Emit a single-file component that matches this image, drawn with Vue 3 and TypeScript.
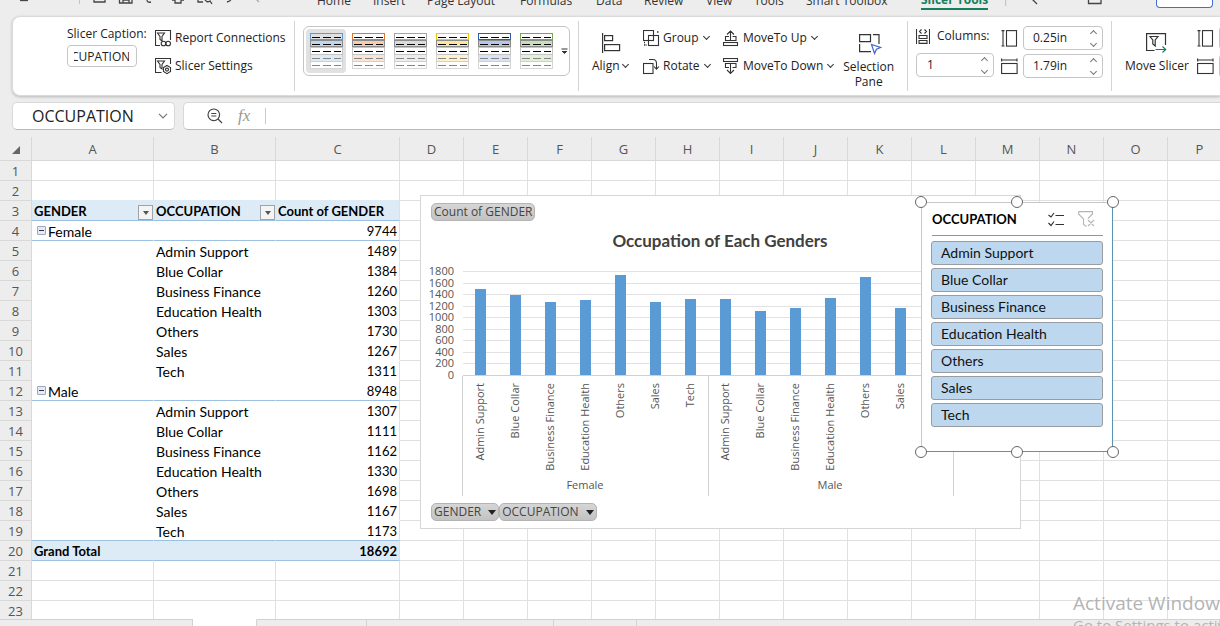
<script setup lang="ts">
import { ref } from 'vue'

interface Theme { name: string; edge: string; mid: string; soft: string }
interface Row { n: number; a?: string; b?: string; c?: string; kind: 'k-plain' | 'k-head' | 'k-group' | 'k-item' | 'k-total' }

const tabs = ['Home', 'Insert', 'Page Layout', 'Formulas', 'Data', 'Review', 'View', 'Tools', 'Smart Toolbox']

const themes: Theme[] = [
  { name: 'Blue', edge: '#5b9bd5', mid: '#bdd7ee', soft: '#deebf7' },
  { name: 'Orange', edge: '#e0752e', mid: '#f8cbad', soft: '#fbe5d6' },
  { name: 'Gray', edge: '#a5a5a5', mid: '#dbdbdb', soft: '#ededed' },
  { name: 'Yellow', edge: '#f0c800', mid: '#ffe699', soft: '#fff2cc' },
  { name: 'Indigo', edge: '#2f5ca8', mid: '#b4c7e7', soft: '#dae3f3' },
  { name: 'Green', edge: '#70ad47', mid: '#c5e0b4', soft: '#e2f0d9' },
]

const letters = 'ABCDEFGHIJKLMNOP'.split('')
const occupations = ['Admin Support', 'Blue Collar', 'Business Finance', 'Education Health', 'Others', 'Sales', 'Tech']
const groups = [
  { name: 'Female', total: 9744, counts: [1489, 1384, 1260, 1303, 1730, 1267, 1311] },
  { name: 'Male', total: 8948, counts: [1307, 1111, 1162, 1330, 1698, 1167, 1173] },
]

const rows: Row[] = []
const add = (r: Omit<Row, 'n'>) => rows.push({ n: rows.length + 1, ...r })
add({ kind: 'k-plain' })
add({ kind: 'k-plain' })
add({ kind: 'k-head', a: 'GENDER', b: 'OCCUPATION', c: 'Count of GENDER' })
for (const g of groups) {
  add({ kind: 'k-group', a: g.name, c: String(g.total) })
  occupations.forEach((o, i) => add({ kind: 'k-item', b: o, c: String(g.counts[i]) }))
}
add({ kind: 'k-total', a: 'Grand Total', c: '18692' })
for (let i = 0; i < 3; i++) add({ kind: 'k-plain' })

const step = 35
const plotLeft = 42
const base = 179
const plotHeight = 104
const bars = groups.flatMap((g, gi) =>
  g.counts.map((v, i) => ({
    label: occupations[i],
    x: plotLeft + (gi * 7 + i) * step + 12,
    h: Math.round((v / 1800) * plotHeight),
  })),
)
const ticks = Array.from({ length: 10 }, (_, i) => ({ v: i * 200, y: Math.round(base - (i * plotHeight) / 9) + 0.5 }))

const handles = ['nw', 'n', 'ne', 'sw', 's', 'se']
const caption = ref('OCCUPATION')
const cellName = ref('OCCUPATION')
const columns = ref('1')
const height = ref('0.25in')
const width = ref('1.79in')
const formula = ref('')
</script>

<template>
  <div class="app">
    <nav class="tabs">
      <div class="quick">
        <svg width="300" height="16" viewBox="0 0 300 16" fill="none" stroke="#444" stroke-width="1.3">
          <path d="M20 0.500H28" />
          <path d="M79.5 0V4" stroke="#c4c4c4" stroke-width="1" />
          <path d="M94 0V2H105V0" />
          <path d="M119.500 0V3H132V0M123 3V0H129V3" />
          <path d="M147 0Q147 3 151 2" />
          <path d="M172 0H175V3H181V0H184" />
          <path d="M198 0V2H203M205 0Q207 3 210 1L212 4" />
          <path d="M227 2Q231 1 231 -1" />
          <path d="M256 -1L259 2" stroke="#aaa" />
        </svg>
      </div>
      <a v-for="t in tabs" :key="t" href="#">{{ t }}</a>
      <a href="#" class="active">Slicer Tools</a>
      <div class="tail">
        <svg width="40" height="16" viewBox="0 0 40 16" fill="none" stroke="#444" stroke-width="1.3">
          <path d="M0.500 0V6" stroke="#c4c4c4" /><path d="M27 -1L32 4" />
        </svg>
        <svg width="16" height="16" viewBox="0 0 16 16" fill="none" stroke="#444" stroke-width="1.300"><path d="M1.500 0V3.500H14V0" /></svg>
        <button class="share" aria-label="Share"></button>
      </div>
    </nav>

    <section class="ribbon">
      <div class="group g-caption">
        <div class="caption">
          <label for="cap">Slicer Caption:</label>
          <input id="cap" v-model="caption" class="cap-input" />
        </div>
        <div class="stack">
          <button class="tool">
            <svg width="17" height="17" viewBox="0 0 17 17" fill="none" stroke="#333" stroke-width="1.100">
              <path d="M5 15.500H0.500V0.500H15.500V10" /><path d="M2.500 3H9.500L7 6.500V11L5 9.500V6.500Z" />
              <circle cx="8.500" cy="13.500" r="2.300" /><circle cx="13.200" cy="13.500" r="2.300" />
            </svg>Report Connections
          </button>
          <button class="tool">
            <svg width="17" height="17" viewBox="0 0 17 17" fill="none" stroke="#333" stroke-width="1.100">
              <path d="M6.500 14.500H0.500V0.500H15.500V6" /><path d="M2.500 3H9.500L7 6.500V11L5 9.500V6.500Z" />
              <path d="M12 7.500L15.500 9.500V13.500L12 15.700L8.500 13.500V9.500Z" /><circle cx="12" cy="11.600" r="1.500" />
            </svg>Slicer Settings
          </button>
        </div>
      </div>

      <div class="group g-gallery">
        <div class="gallery">
          <button v-for="(t, i) in themes" :key="t.name" class="thumb" :class="{ on: i === 0 }" :aria-label="t.name">
            <svg width="33" height="36" viewBox="0 0 33 36" shape-rendering="crispEdges" fill="#fff">
              <rect x="0.500" y="28.500" width="32" height="7" stroke="#d6d6d6" />
              <rect x="0.500" y="21.500" width="32" height="7" :fill="t.soft" stroke="#cfcfcf" />
              <rect x="0.500" y="14.500" width="32" height="7" stroke="#c4c4c4" />
              <rect x="0.500" y="7.500" width="32" height="6" :fill="t.mid" stroke="#8c8c8c" />
              <rect x="0.500" y="0.500" width="32" height="6" :fill="i === 0 ? '#e1e1e1' : '#fff'" :stroke="t.edge" />
              <path d="M2 4.500H31M2 11.500H31M2 18.500H31" stroke="#000" stroke-dasharray="8 3" />
              <path d="M2 25.500H31M2 32.500H31" stroke="#858585" stroke-dasharray="8 3" />
            </svg>
          </button>
          <button class="more" aria-label="More styles">
            <svg width="7" height="7" viewBox="0 0 7 7"><path d="M0.500 1H6.500" stroke="#333" /><path d="M1 3L3.500 5.500L6 3" fill="#333" stroke="#333" /></svg>
          </button>
        </div>
      </div>

      <div class="group g-arrange">
        <button class="big align">
          <svg width="19" height="20" viewBox="0 0 19 20" fill="none" stroke="#333" stroke-width="1.200">
            <path d="M0.600 0V20" /><rect x="2.600" y="2.600" width="8" height="5" /><rect x="2.600" y="11.600" width="15" height="6" />
          </svg>
          <span>Align <i class="chev"></i></span>
        </button>
        <div class="stack s-group">
          <button class="tool">
            <svg width="17" height="17" viewBox="0 0 17 17" fill="none" stroke="#333" stroke-width="1.100">
              <rect x="0.500" y="0.500" width="10" height="10" /><rect x="5.500" y="5.500" width="10" height="10" />
              <path d="M14 2H15.500M1 15H2.500M1 12.500H2M4 15H3.500" stroke-width="1.600" />
            </svg>Group <i class="chev"></i>
          </button>
          <button class="tool">
            <svg width="17" height="17" viewBox="0 0 17 17" fill="none" stroke="#333" stroke-width="1.100">
              <rect x="0.500" y="5.500" width="9.500" height="10" /><path d="M6 1.500H10Q13.500 1.500 13.500 5.500V11M11 8.500L13.500 11.200L16 8.500" />
            </svg>Rotate <i class="chev"></i>
          </button>
        </div>
        <div class="stack">
          <button class="tool">
            <svg width="17" height="17" viewBox="0 0 17 17" fill="none" stroke="#333" stroke-width="1.100">
              <path d="M7.500 10.500V1M4 4.500L7.500 1L11 4.500M6 6.500H2.500V10.500H13V6.500H9.500" /><rect x="0.500" y="12.500" width="14" height="3" />
            </svg>MoveTo Up <i class="chev"></i>
          </button>
          <button class="tool">
            <svg width="17" height="17" viewBox="0 0 17 17" fill="none" stroke="#333" stroke-width="1.100">
              <rect x="0.500" y="0.500" width="14" height="3" /><path d="M7.500 5.500V15.500M4 12L7.500 15.500L11 12M6 9.500H2.500V5.500H13V9.500H9.500" />
            </svg>MoveTo Down <i class="chev"></i>
          </button>
        </div>
        <button class="big pane">
          <svg width="23" height="22" viewBox="0 0 23 22" fill="none" stroke="#333" stroke-width="1.200">
            <path d="M0.600 7V1.600H11.500V8.600H0.600ZM14 1.600H20V11M0.600 11V18.600H12" />
            <path d="M12.500 11.500L21.500 14.500L17.500 16.200L15.500 20.500Z" stroke="#3f63cf" />
          </svg>
          <span>Selection<br />Pane</span>
        </button>
      </div>

      <div class="group g-size">
        <div class="cols">
          <label for="cols">
            <svg width="14" height="15" viewBox="0 0 14 15" fill="none" stroke="#333" stroke-width="1.100">
              <path d="M0.500 0V15M13.500 0V15M5.500 0.500L3.500 2.500L5.500 4.500M8.500 0.500L10.500 2.500L8.500 4.500M3 6.500H11V9.500H3ZM3 11.500H11V14.400H3Z" />
            </svg>Columns:
          </label>
          <div class="spin"><input id="cols" v-model="columns" />
            <div><button class="up" aria-label="More columns"></button><button class="down" aria-label="Fewer columns"></button></div>
          </div>
        </div>
        <div class="dims">
          <label class="dim">
            <svg width="17" height="17" viewBox="0 0 17 17" fill="none" stroke="#333" stroke-width="1.100"><path d="M2 1V16M0.500 0.600H3.500M0.500 16H3.500" /><rect x="5.500" y="0.600" width="10" height="15.500" /></svg>
            <span class="spin"><input v-model="height" aria-label="Height" />
              <span><button class="up" aria-label="Taller"></button><button class="down" aria-label="Shorter"></button></span></span>
          </label>
          <label class="dim">
            <svg width="17" height="17" viewBox="0 0 17 17" fill="none" stroke="#333" stroke-width="1.100"><path d="M1 2H16M0.600 0.500V3.500M16 0.500V3.500" /><rect x="0.600" y="5.500" width="15.500" height="10" /></svg>
            <span class="spin"><input v-model="width" aria-label="Width" />
              <span><button class="up" aria-label="Wider"></button><button class="down" aria-label="Narrower"></button></span></span>
          </label>
        </div>
      </div>

      <div class="group g-move">
        <button class="big move">
          <svg width="21" height="20" viewBox="0 0 21 20" fill="none" stroke="#333" stroke-width="1.200">
            <path d="M8.500 17.500H0.600V0.600H19.500V12" /><path d="M4 3.500H12L9.200 7V13L6.800 11V7Z" />
            <path d="M9.500 16.500H19.500M16.500 13.500L19.700 16.500L16.500 19.500" stroke="#14805e" />
          </svg>
          <span>Move Slicer</span>
        </button>
        <div class="dims">
          <label class="dim">
            <svg width="17" height="17" viewBox="0 0 17 17" fill="none" stroke="#333" stroke-width="1.100"><path d="M2 1V16M0.500 0.600H3.500M0.500 16H3.500" /><rect x="5.500" y="0.600" width="10" height="15.500" /></svg>
            <span class="spin"><input aria-label="Button height" /></span>
          </label>
          <label class="dim">
            <svg width="17" height="17" viewBox="0 0 17 17" fill="none" stroke="#333" stroke-width="1.100"><path d="M1 2H16M0.600 0.500V3.500M16 0.500V3.500" /><rect x="0.600" y="5.500" width="15.500" height="10" /></svg>
            <span class="spin"><input aria-label="Button width" /></span>
          </label>
        </div>
      </div>
    </section>

    <section class="formula-row">
      <div class="namebox">
        <input v-model="cellName" aria-label="Name box" />
        <button aria-label="Names">
          <svg width="10" height="6" viewBox="0 0 10 6" fill="none" stroke="#777" stroke-width="1.200"><path d="M1 0.800L5 4.800L9 0.800" /></svg>
        </button>
      </div>
      <div class="formula">
        <button aria-label="Search">
          <svg width="16" height="16" viewBox="0 0 16 16" fill="none" stroke="#444" stroke-width="1.200"><circle cx="6.800" cy="6.800" r="5.800" /><path d="M4.300 5.500H9.300M4.300 8H9.300M11 11L15 15" /></svg>
        </button>
        <button class="fx">fx</button>
        <input v-model="formula" aria-label="Formula" />
      </div>
    </section>

    <main class="sheet">
      <table>
        <colgroup>
          <col class="w-num" /><col class="w-ab" /><col class="w-ab" /><col class="w-c" />
          <col v-for="l in letters.slice(3)" :key="l" class="w-std" />
        </colgroup>
        <thead>
          <tr>
            <th class="corner"><svg width="8" height="8" viewBox="0 0 8 8"><path d="M8 0V8H0Z" fill="#666" /></svg></th>
            <th v-for="l in letters" :key="l">{{ l }}</th>
          </tr>
        </thead>
        <tbody>
          <tr v-for="r in rows" :key="r.n" :class="[r.kind, { last: r.n === 19, above: r.n === 2 }]">
            <th>{{ r.n }}</th>
            <td class="p a">
              <div class="cell">
                <button v-if="r.kind === 'k-group'" class="fold" :aria-label="'Collapse ' + r.a"></button>
                <span>{{ r.a }}</span>
                <button v-if="r.kind === 'k-head'" class="filter" aria-label="Filter gender"></button>
              </div>
            </td>
            <td class="p b">
              <div class="cell">
                <span>{{ r.b }}</span>
                <button v-if="r.kind === 'k-head'" class="filter" aria-label="Filter occupation"></button>
              </div>
            </td>
            <td class="p c">{{ r.c }}</td>
            <td v-for="l in letters.slice(3)" :key="l"></td>
          </tr>
        </tbody>
      </table>

      <figure class="chart">
        <svg width="599" height="332" viewBox="0 0 599 332">
          <text class="title" x="299" y="51" text-anchor="middle">Occupation of Each Genders</text>
          <g v-for="t in ticks" :key="t.v">
            <path :d="`M42 ${t.y}H532`" :stroke="t.v ? '#e2e2e2' : '#d0d0d0'" />
            <text x="33" :y="t.y + 3" text-anchor="end">{{ t.v }}</text>
          </g>
          <g v-for="(b, i) in bars" :key="i">
            <rect :x="b.x" :y="base - b.h" width="11" :height="b.h" fill="#5b9bd5" />
            <text :transform="`translate(${b.x + 9} 187) rotate(-90)`" text-anchor="end">{{ b.label }}</text>
          </g>
          <path d="M41.500 180V300M287.500 180V300M532.500 180V300" stroke="#d0d0d0" />
          <text x="164" y="293" text-anchor="middle">Female</text>
          <text x="409" y="293" text-anchor="middle">Male</text>
        </svg>
        <button class="pill top">Count of GENDER</button>
        <div class="fields">
          <button class="pill">GENDER<i></i></button>
          <button class="pill">OCCUPATION<i></i></button>
        </div>
      </figure>

      <aside class="slicer">
        <header>
          <h2>OCCUPATION</h2>
          <button aria-label="Multi-select">
            <svg width="16" height="15" viewBox="0 0 16 15" fill="none" stroke="#333" stroke-width="1.200"><path d="M7.500 3.500H16M7.500 12.500H16M0.500 3L3 5L6 1M0.500 11L3 13.500L6 9.500" /></svg>
          </button>
          <button aria-label="Clear filter">
            <svg width="17" height="17" viewBox="0 0 17 17" fill="none" stroke="#b5b5b5" stroke-width="1.100"><path d="M0.600 0.600H14.500V3L10 7.500M0.600 0.600V3L5.500 8V13.500L8.500 15.500M10 9L16 15M16 9L10 15" /></svg>
          </button>
        </header>
        <button v-for="o in occupations" :key="o" class="option">{{ o }}</button>
        <span v-for="h in handles" :key="h" class="handle" :class="h"></span>
      </aside>
    </main>

    <footer class="sheets">
      <span class="s1"></span><span class="s2"></span><span class="s3"></span><span class="s4"></span><span class="s5"></span><span class="s6"></span>
    </footer>

    <div class="notice"><strong>Activate Windows</strong><span>Go to Settings to activate Windows.</span></div>
  </div>
</template>

<style>
html, body { background: #ededed; overflow: hidden; }
</style>

<style scoped>
* { box-sizing: border-box; }
.app {
  position: relative; display: flex; flex-direction: column; height: 100vh; overflow: hidden;
  background: #ededed; color: #222; font: 12px/16px "Open Sans", "Noto Sans", sans-serif;
}
button { border: 0; padding: 0; margin: 0; background: none; font: inherit; color: inherit; white-space: nowrap; }
input { font: inherit; color: inherit; border: 0; padding: 0; background: none; min-width: 0; outline: 0; }
svg { display: block; flex: none; }

.tabs { display: grid; grid-template-columns: 317px 56px 54px 93px 76px 48px 62px 48px 52px 113px 86px 1fr; grid-template-rows: 16px; height: 16px; flex: none; overflow: hidden; align-items: end; }
.quick, .tail { height: 16px; display: flex; }
.tabs a { color: #333; text-decoration: none; line-height: 17px; padding-bottom: 7px; white-space: nowrap; font-size: 12px; }
.tabs .active { color: #14805e; font-weight: 700; padding-bottom: 2px; border-bottom: 2px solid #14805e; margin: 0 17px 6px 2px; line-height: 12px; }
.tail svg + svg { margin-left: 42px; }
.share { width: 57px; height: 8px; margin-left: 53px; border: 1px solid #3f6fd0; border-top: 0; border-radius: 0 0 4px 4px; background: #fff; }

.ribbon { display: flex; flex: none; height: 80px; margin-left: 12px; background: #fff; border: 1px solid #dadada; border-right: 0; border-radius: 8px 0 0 8px; box-shadow: 0 1px 3px #b8b8b8; padding: 4px 0; overflow: clip; overflow-clip-margin: 6px; }
.group { display: flex; align-items: flex-start; padding-top: 3px; flex: none; border-right: 1px solid #d4d4d4; height: 70px; }
.g-caption { width: 282px; padding-left: 54px; gap: 13px; }
.g-gallery { width: 284px; padding: 5px 0 0 8px; }
.g-arrange { width: 329px; padding-left: 13px; }
.g-size { width: 204px; padding-left: 8px; gap: 7px; }
.g-move { width: 109px; padding-left: 13px; border: 0; gap: 8px; }
.caption { width: 75px; display: flex; flex-direction: column; padding-top: 2px; gap: 3px; }
.caption label { white-space: nowrap; }
.cap-input { width: 70px; height: 22px; border: 1px solid #c6c6c6; border-radius: 4px; padding: 0 7px 0 6px; text-indent: -20px; }
.stack { display: flex; flex-direction: column; }
.tool { display: flex; align-items: center; height: 28px; gap: 3px; }
.s-group { width: 80px; }
.chev { display: inline-block; width: 5px; height: 5px; border: solid #333; border-width: 0 1px 1px 0; transform: rotate(45deg); margin: 0 2px 3px 2px; }
.align .chev { margin-left: 0; }
.gallery { display: flex; align-items: center; width: 267px; height: 50px; border: 1px solid #c4c4c4; border-radius: 6px; padding-left: 2px; gap: 2px; }
.thumb { width: 40px; height: 44px; border-radius: 4px; display: grid; place-items: center; }
.thumb.on { background: #e1e1e1; }
.more { padding-left: 3px; }
.big { display: flex; flex-direction: column; align-items: center; }
.align { width: 51px; padding-top: 9px; gap: 5px; align-items: flex-start; }
.align svg { margin-left: 10px; }
.pane { margin-left: auto; margin-right: 13px; padding-top: 9px; gap: 4px; }
.pane svg { margin-left: 4px; }
.pane span { line-height: 15px; }
.move { padding-top: 9px; gap: 5px; }
.cols label { display: flex; align-items: center; gap: 7px; height: 24px; margin-bottom: 5px; }
.cols .spin { width: 78px; }
.cols .spin input { padding-left: 1px; }
.dims { display: flex; flex-direction: column; gap: 4px; padding-top: 2px; }
.dim { display: flex; align-items: center; gap: 5px; }
.spin { display: flex; width: 80px; height: 24px; border: 1px solid #c6c6c6; border-radius: 4px; padding-left: 9px; background: #fff; }
.spin input { flex: 1; width: 0; }
.spin > div, .spin > span { width: 17px; display: flex; flex-direction: column; align-items: center; justify-content: center; gap: 5px; }
.up, .down { width: 5px; height: 5px; border: solid #777; border-width: 1px 0 0 1px; transform: rotate(45deg); }
.down { border-width: 0 1px 1px 0; }

.formula-row { display: flex; flex: none; gap: 8px; padding: 6px 0 7px 12px; height: 41px; }
.namebox, .formula { display: flex; align-items: center; background: #fff; border: 1px solid #d8d8d8; border-bottom-color: #b8b8b8; border-radius: 5px; }
.namebox { width: 163px; padding: 0 6px 0 19px; }
.namebox input { flex: 1; font: 16px/20px "Open Sans", sans-serif; }
.formula { flex: 1; border-right: 0; border-radius: 5px 0 0 5px; padding-left: 23px; }
.fx { font: italic 17px/20px "Liberation Serif", serif; color: #999; width: 17px; margin: 0 10px 0 15px; text-align: left; }
.formula input { flex: 1; height: 16px; border-left: 1px solid #ccc; padding-left: 6px; }

.sheet { position: relative; flex: 1; min-height: 0; overflow: hidden; background: #fff; }
table { table-layout: fixed; width: 1232px; border-collapse: separate; border-spacing: 0; font: 14px/17px Lato, "Open Sans", sans-serif; color: #000; }
.w-num { width: 32px; } .w-ab { width: 122px; } .w-c { width: 124px; } .w-std { width: 64px; }
th, td { padding: 2px 0 0; height: 20px; border: solid #e0e0e0; border-width: 0 1px 1px 0; white-space: nowrap; }
th { background: #ededed; color: #555; font-weight: 400; border-color: #d8d8d8; font-family: "Open Sans", sans-serif; font-size: 13px; }
thead th { height: 24px; }
.corner svg { margin-left: 12px; }
.cell { display: flex; align-items: center; height: 17px; padding-left: 2px; }
.cell span { flex: 1; }
td.c { text-align: right; padding-right: 2px; font-size: 13px; }
.k-head .c { text-align: left; padding-left: 2px; }
tr:not(.k-plain) .p { border-bottom-color: #fff; }
tr:not(.k-plain) .a, tr:not(.k-plain) .b { border-right-color: transparent; }
tr.k-head .p, tr.k-total .p { background: #ddebf7; font-weight: 700; font-size: 13px; }
tr.above .p { border-bottom-color: #ddebf7; }
tr.k-head .p, tr.k-group .p, tr.last .p, tr.k-total .p { border-bottom-color: #9dc0e0; }
.filter { width: 15px; height: 15px; border: 1px solid #a0a4aa; background: #f4f4f4; display: grid; place-items: center; margin-top: 2px; }
.filter::after { content: ""; border: solid transparent; border-width: 4px 3px 0; border-top-color: #555; }
.fold { width: 9px; height: 9px; border: 1px solid #9aa7bd; border-radius: 1px; background: #e6ebf3; display: grid; place-items: center; margin: 0 2px 2px 3px; }
.fold::after { content: ""; width: 5px; height: 1px; background: #334; }

.chart { position: absolute; left: 420px; top: 58px; width: 601px; height: 334px; margin: 0; background: #fff; border: 1px solid #d6d6d6; font: 11px/14px "Open Sans", sans-serif; }
.chart text { fill: #555; font-size: 11px; }
.chart .title { font: 700 17px Lato, sans-serif; fill: #404040; }
.pill { display: flex; align-items: center; height: 18px; padding: 0 2px; border: 1px solid #b4b4b4; border-radius: 5px; background: linear-gradient(#d6d6d6, #c2c2c2); color: #444; font: 12px/16px "Open Sans", sans-serif; }
.pill i { border: solid transparent; border-width: 5px 4px 0; border-top-color: #222; margin-left: 7px; }
.pill.top { position: absolute; left: 10px; top: 7px; }
.fields { position: absolute; left: 10px; bottom: 7px; display: flex; }

.slicer { position: absolute; left: 921px; top: 65px; width: 192px; height: 250px; background: #fff; border: 1px solid #c8c8c8; border-right-color: #5b93b5; border-bottom-color: #5b93b5; display: flex; flex-direction: column; gap: 3px; padding: 0 9px; font: 14px/18px Lato, "Open Sans", sans-serif; color: #111; }
.slicer header { display: flex; align-items: center; height: 33px; margin-left: 1px; border-bottom: 1px solid #6f9fc4; margin-bottom: 2px; }
.slicer h2 { flex: 1; margin: 0; font-size: 13px; color: #000; }
.slicer header button + button { margin: 0 8px 0 14px; }
.option { height: 24px; flex: none; border: 1px solid #979da3; border-radius: 3px; background: #bdd7ee; text-align: left; padding-left: 9px; }
.handle { position: absolute; width: 12px; height: 12px; border: 1px solid #666; border-radius: 50%; background: #fff; }
.nw { left: -7px; top: -7px; } .n { left: 89px; top: -7px; } .ne { right: -7px; top: -7px; }
.sw { left: -7px; bottom: -7px; } .s { left: 89px; bottom: -7px; } .se { right: -7px; bottom: -7px; }

.sheets { display: flex; height: 7px; flex: none; background: #ededed; }
.sheets span { border-top: 1px solid #d2d2d2; border-right: 1px solid #d2d2d2; }
.s1 { width: 193px; } .s2 { width: 64px; background: #fff; } .s3 { width: 110px; } .s4 { width: 187px; } .s5 { width: 83px; } .s6 { flex: 1; }
.sheets .s2 { border-top-color: #fff; }
.notice { position: absolute; left: 1073px; top: 592px; display: flex; flex-direction: column; color: #b4b4b4; white-space: nowrap; font-size: 15px; line-height: 22px; }
.notice strong { font-weight: 400; font-size: 19px; }
</style>
